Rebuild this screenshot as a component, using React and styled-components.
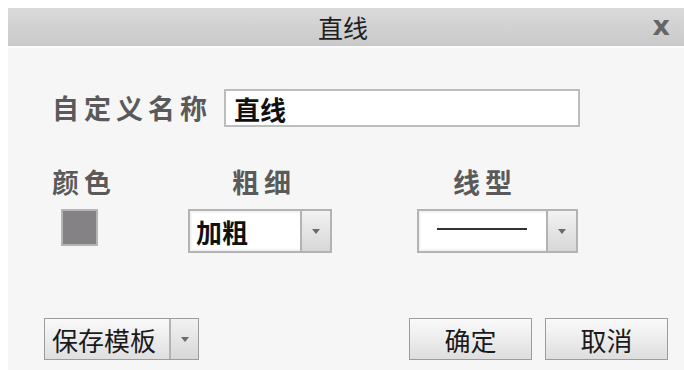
import React from "react";
import styled, { createGlobalStyle } from "styled-components";

const Global = createGlobalStyle`
  *, *::before, *::after { box-sizing: border-box; }
  html, body { margin: 0; padding: 0; background: #ffffff; }
  body { padding: 8px 0 0 8px; overflow: hidden; font-family: "Noto Sans CJK SC", "Noto Sans", sans-serif; }
`;

const Dialog = styled.div`
  width: 676px;
  height: 362px;
  background: #f6f6f6;
  display: flex;
  flex-direction: column;
`;

const TitleBar = styled.div`
  height: 40px;
  background: linear-gradient(#dadada, #c9c9c9);
  border-bottom: 2px solid #fbfbfb;
  display: flex;
  align-items: center;
  justify-content: center;
  position: relative;
`;

const Title = styled.span`
  font-size: 25px;
  color: #1e1e1e;
  font-weight: 400;
  padding-right: 6px;
`;

const Close = styled.span`
  position: absolute;
  right: 14px;
  top: 2px;
  font-family: "DejaVu Sans", sans-serif;
  font-size: 27px;
  font-weight: 700;
  color: #666;
`;

const Body = styled.div`
  flex: 1;
  padding: 41px 16px 10px 44px;
  display: flex;
  flex-direction: column;
`;

const NameRow = styled.div`
  display: flex;
  align-items: center;
  gap: 12px;
`;

const Label = styled.span`
  font-size: 27px;
  font-weight: 700;
  color: #5a5a5a;
  letter-spacing: 5px;
  line-height: 30px;
  padding-left: ${(p) => p.$indent || 0}px;
`;

const NameInput = styled.div`
  width: 356px;
  height: 38px;
  background: #fff;
  border: 2px solid #bdbdbd;
  display: flex;
  align-items: center;
  padding-left: 8px;
  font-size: 26px;
  font-weight: 700;
  color: #111;
`;

const FieldRow = styled.div`
  display: flex;
  margin-top: 40px;
`;

const Field = styled.div`
  display: flex;
  flex-direction: column;
  gap: 12px;
  width: ${(p) => p.$width}px;
`;

const Swatch = styled.div`
  width: 37px;
  height: 37px;
  margin-left: 9px;
  background: #848284;
  border: 2px solid #b4b4b4;
`;

const Select = styled.div`
  width: ${(p) => p.$width}px;
  height: 44px;
  border: 2px solid #b3b3b3;
  background: #fff;
  display: flex;
`;

const SelectValue = styled.div`
  flex: 1;
  display: flex;
  align-items: center;
  padding-left: 4px;
  font-size: 26px;
  font-weight: 700;
  color: #111;
  border: 2px solid #f4f4f4;
  border-right: none;
`;

const LineSample = styled.div`
  width: 90px;
  height: 2px;
  background: #333;
  margin-left: 12px;
  margin-top: -4px;
`;

const ArrowBtn = styled.div`
  width: ${(p) => p.$w || 30}px;
  background: linear-gradient(#f2f2f2, #d7d7d7);
  border-left: 2px solid #b3b3b3;
  display: flex;
  align-items: center;
  justify-content: center;
  &::after {
    content: "";
    border-left: 4px solid transparent;
    border-right: 4px solid transparent;
    border-top: 5px solid #6a6a6a;
  }
`;

const Footer = styled.div`
  margin-top: auto;
  display: flex;
  align-items: center;
  margin-left: -8px;
`;

const SplitButton = styled.div`
  display: flex;
  height: 42px;
  border: 1px solid #9c9c9c;
  background: linear-gradient(#f9f9f9, #dfdfdf);
`;

const SplitLabel = styled.div`
  width: 124px;
  padding-left: 7px;
  display: flex;
  align-items: center;
  font-size: 26px;
  color: #1a1a1a;
`;

const Spacer = styled.div`
  flex: 1;
`;

const Button = styled.div`
  width: 123px;
  height: 42px;
  border: 1px solid #9c9c9c;
  background: linear-gradient(#fafafa, #dedede);
  display: flex;
  align-items: center;
  justify-content: center;
  font-size: 26px;
  color: #1a1a1a;
  margin-left: ${(p) => p.$gap || 0}px;
`;

export default function App() {
  return (
    <>
      <Global />
      <Dialog>
        <TitleBar>
          <Title>直线</Title>
          <Close>x</Close>
        </TitleBar>
        <Body>
          <NameRow>
            <Label>自定义名称</Label>
            <NameInput>直线</NameInput>
          </NameRow>
          <FieldRow>
            <Field $width={136}>
              <Label>颜色</Label>
              <Swatch />
            </Field>
            <Field $width={229}>
              <Label $indent={44}>粗细</Label>
              <Select $width={144}>
                <SelectValue>加粗</SelectValue>
                <ArrowBtn />
              </Select>
            </Field>
            <Field $width={161}>
              <Label $indent={36}>线型</Label>
              <Select $width={161}>
                <SelectValue>
                  <LineSample />
                </SelectValue>
                <ArrowBtn />
              </Select>
            </Field>
          </FieldRow>
          <Footer>
            <SplitButton>
              <SplitLabel>保存模板</SplitLabel>
              <ArrowBtn $w={29} />
            </SplitButton>
            <Spacer />
            <Button>确定</Button>
            <Button $gap={13}>取消</Button>
          </Footer>
        </Body>
      </Dialog>
    </>
  );
}
